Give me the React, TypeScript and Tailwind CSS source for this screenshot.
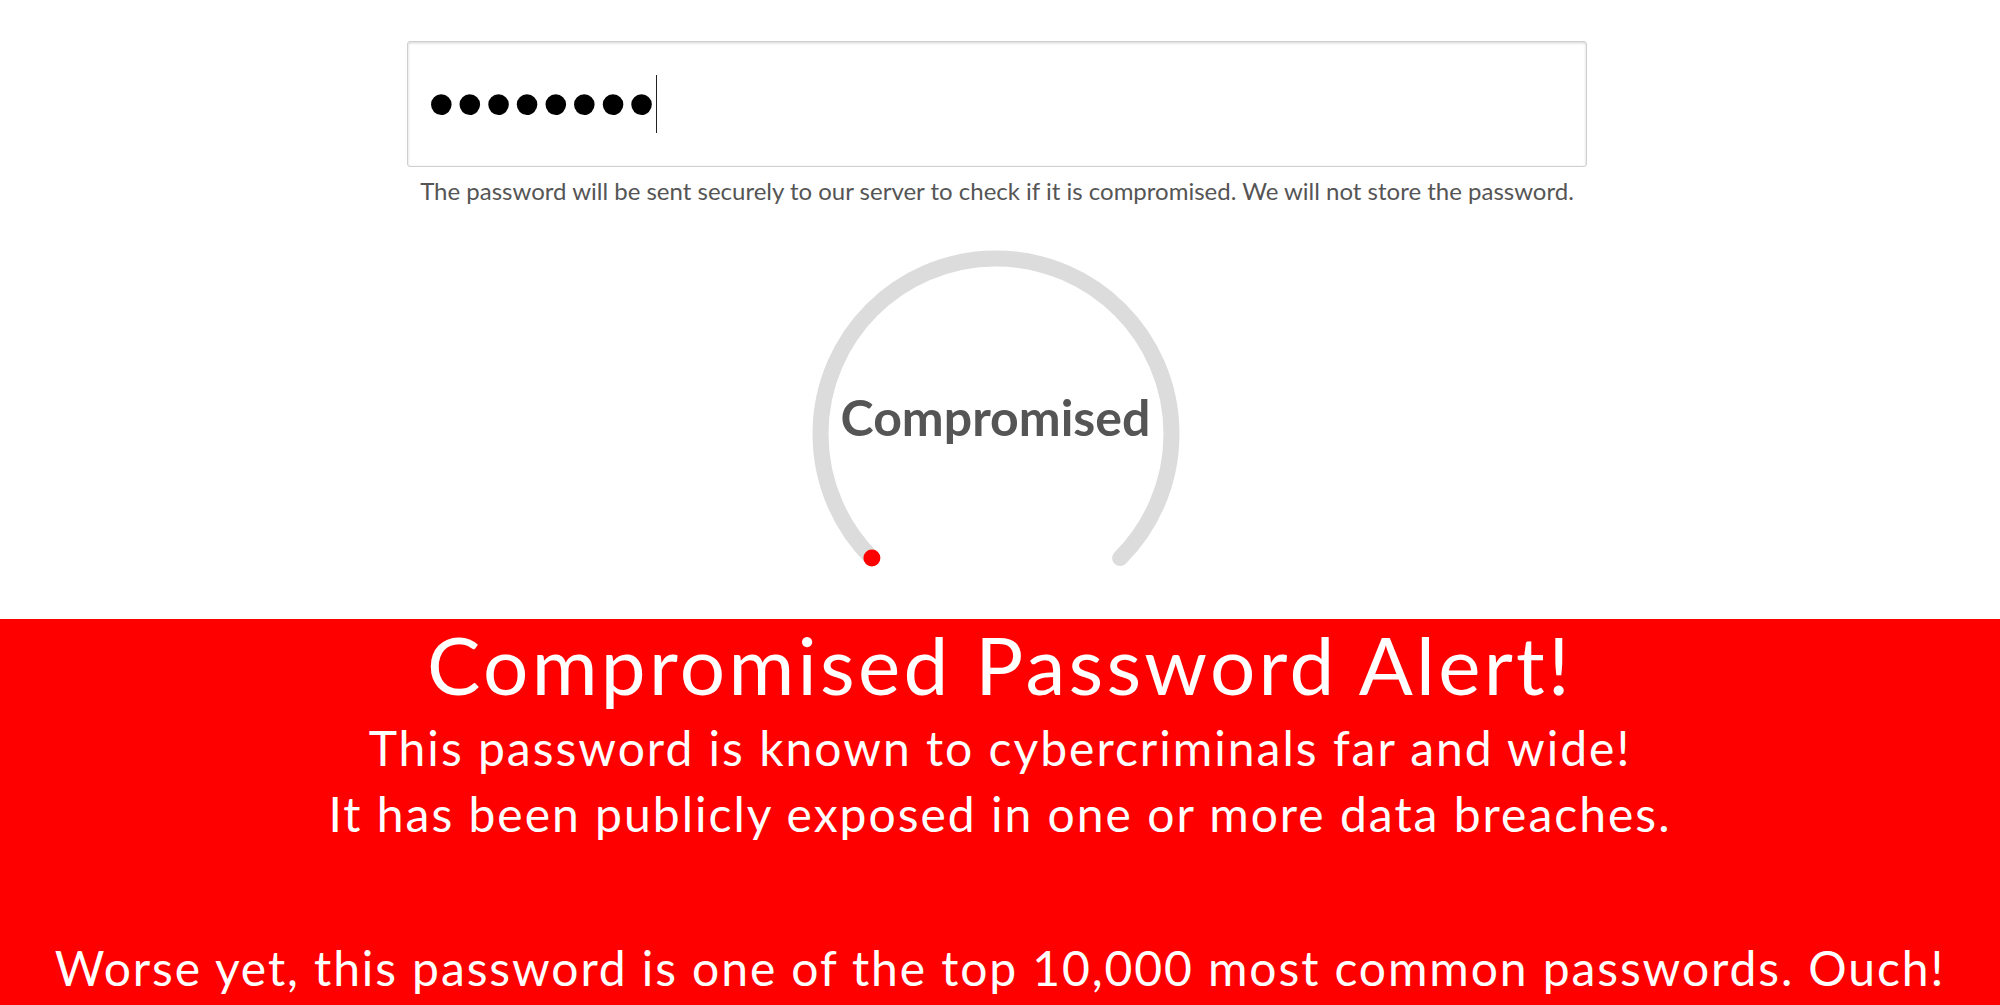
function Gauge() {
  return (
    <div className="relative ml-[-9px] mt-[39px] h-[375px] w-[380px]">
      <svg width="380" height="375" viewBox="0 0 380 375" className="block">
        <path
          d="M 65.9 314.1 A 175.5 175.5 0 1 1 314.1 314.1"
          fill="none"
          stroke="#dcdcdc"
          strokeWidth="16"
          strokeLinecap="round"
        />
        <circle cx="65.9" cy="314.1" r="8.5" fill="#ff0000" />
      </svg>
      <div className="absolute inset-x-0 top-[148px] text-center text-[50px] font-bold leading-[50px] text-[#555555]">
        Compromised
      </div>
    </div>
  );
}

export default function App() {
  return (
    <div className="min-h-screen bg-white font-['Lato',sans-serif]">
      <section className="flex flex-col items-center pt-[41px]">
        <div className="ml-[-6px] w-[1180px]">
          <div className="flex h-[126px] items-center rounded-[3px] border border-[#cfcfcf] bg-white pl-[20px] shadow-[inset_0_1px_3px_rgba(0,0,0,0.18)]">
            <span className="font-['Liberation_Sans',sans-serif] text-[76px] leading-none tracking-[2px] text-black">
              ••••••••
            </span>
            <span className="ml-[-1px] h-[58px] w-[1.5px] bg-[#222222]" />
          </div>
          <p className="mt-[10px] text-center text-[24px] leading-[28px] text-[#555555]">
            The password will be sent securely to our server to check if it is compromised. We will not store the
            password.
          </p>
        </div>
        <Gauge />
      </section>

      <section className="bg-[#ff0000] pb-[20px] text-center text-white">
        <h1 className="text-[80px] font-normal leading-[90px] tracking-[3.3px]">Compromised Password Alert!</h1>
        <p className="mt-[6px] text-[48px] leading-[66px] tracking-[2px]">
          This password is known to cybercriminals far and wide!
          <br />
          It has been publicly exposed in one or more data breaches.
        </p>
        <p className="mt-[88px] text-[48px] leading-[66px] tracking-[1.9px]">
          Worse yet, this password is one of the top 10,000 most common passwords. Ouch!
        </p>
      </section>
    </div>
  );
}
